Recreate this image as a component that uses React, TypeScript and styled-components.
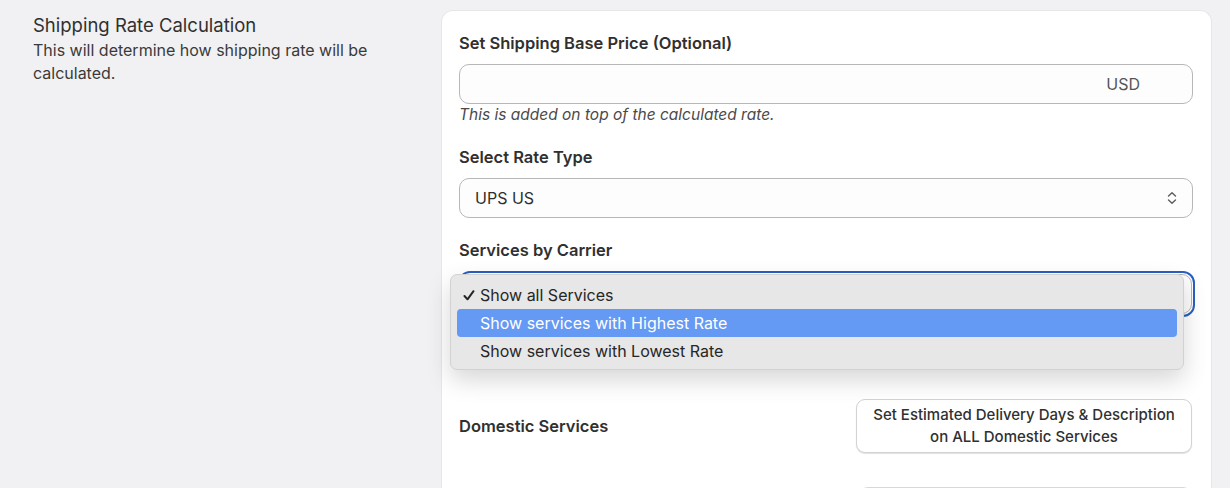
import React from 'react';
import styled, { createGlobalStyle } from 'styled-components';

const GlobalStyle = createGlobalStyle`
	html, body {
		margin: 0;
		padding: 0;
		background: #f1f1f3;
		overflow: hidden;
	}
	body {
		font-family: Inter, "Noto Sans", "Liberation Sans", sans-serif;
		color: #303030;
	}
`;

const Page = styled.div`
	display: grid;
	grid-template-columns: 408px 771px;
	height: 488px;
	padding: 10px 0 0 33px;
	box-sizing: border-box;
`;

const Intro = styled.div`
	padding-top: 4px;
`;

const IntroTitle = styled.div`
	font-size: 18.5px;
	line-height: 22px;
	color: #303030;
	margin-bottom: 3px;
`;

const IntroText = styled.div`
	font-size: 16px;
	line-height: 23px;
	color: #3a3a3a;
	width: 360px;
`;

const Card = styled.div`
	background: #ffffff;
	border: 1px solid #e6e6e8;
	border-bottom: none;
	border-radius: 12px 12px 0 0;
	padding: 22px 18px 0 17px;
	box-sizing: border-box;
`;

const Label = styled.div<{ top?: number }>`
	font-size: 16.5px;
	font-weight: 600;
	line-height: 20px;
	color: #303030;
	margin-top: ${p => p.top || 0}px;
	margin-bottom: 11px;
`;

const Field = styled.div`
	display: flex;
	align-items: center;
	justify-content: space-between;
	height: 40px;
	border: 1px solid #b7b7b7;
	border-radius: 10px;
	background: #fdfdfd;
	box-sizing: border-box;
	padding: 0 15px;
	font-size: 16px;
	color: #303030;
`;

const Suffix = styled.span`
	color: #555;
	margin-right: 37px;
`;

const Help = styled.div`
	font-size: 15.5px;
	font-style: italic;
	line-height: 20px;
	color: #4a4a4a;
	margin-top: 1px;
`;

const FocusRing = styled.div`
	position: relative;
	border: 2px solid #2b5fbf;
	border-radius: 12px;
	padding: 1px;
	margin-left: -1px;
	margin-right: -2px;
`;

const Menu = styled.div`
	position: absolute;
	left: -10px;
	top: 1px;
	width: 734px;
	padding: 6px 6px 4px 6px;
	box-sizing: border-box;
	background: #e7e7e7;
	border: 1px solid #d2d2d2;
	border-radius: 7px;
	box-shadow: 0 10px 24px rgba(0, 0, 0, 0.16);
	z-index: 2;
`;

const MenuItem = styled.div<{ active?: boolean }>`
	position: relative;
	height: 28px;
	line-height: 28px;
	padding-left: 23px;
	border-radius: 4px;
	font-size: 16px;
	color: ${p => (p.active ? '#ffffff' : '#262626')};
	background: ${p => (p.active ? '#6499f4' : 'transparent')};
`;

const Check = styled.span`
	position: absolute;
	left: 6px;
	top: 9px;
	display: flex;
`;

const Row = styled.div`
	display: flex;
	align-items: center;
	justify-content: space-between;
	margin-top: 82px;
`;

const RowTitle = styled.div`
	font-size: 16.5px;
	font-weight: 600;
	color: #303030;
`;

const Button = styled.button`
	width: 336px;
	height: 54px;
	margin-right: 1px;
	border: 1px solid #d3d3d3;
	border-radius: 9px;
	background: #fff;
	box-shadow: 0 1px 1px rgba(0, 0, 0, 0.12);
	font-family: inherit;
	font-size: 15px;
	font-weight: 500;
	line-height: 22px;
	color: #303030;
	padding: 0 6px;
`;

const NextField = styled.div`
	margin: 34px 1px 0 400px;
	height: 20px;
	border: 1px solid #d8d8d8;
	border-radius: 9px;
`;

function UpDown() {
	return <svg width="10" height="14" viewBox="0 0 10 14" fill="none" stroke="#5c5c5c" strokeWidth="1.4" strokeLinecap="round" strokeLinejoin="round">
	         <path d="M1.5 5 L5 1.8 L8.5 5" />
	         <path d="M1.5 9 L5 12.2 L8.5 9" />
	       </svg>;
}

function CheckMark() {
	return <svg width="12" height="11" viewBox="0 0 12 11" fill="none" stroke="#262626" strokeWidth="2" strokeLinecap="round" strokeLinejoin="round">
	         <path d="M1.5 6 L4.5 9.3 L10.5 1.2" />
	       </svg>;
}

function App() {
	return <>
	         <GlobalStyle />
	         <Page>
	           <Intro>
	             <IntroTitle>Shipping Rate Calculation</IntroTitle>
	             <IntroText>This will determine how shipping rate will be calculated.</IntroText>
	           </Intro>
	           <Card>
	             <Label>Set Shipping Base Price (Optional)</Label>
	             <Field><span></span><Suffix>USD</Suffix></Field>
	             <Help>This is added on top of the calculated rate.</Help>

	             <Label top={22}>Select Rate Type</Label>
	             <Field>UPS US<UpDown /></Field>

	             <Label top={22}>Services by Carrier</Label>
	             <FocusRing>
	               <Field><span></span><UpDown /></Field>
	               <Menu>
	                 <MenuItem><Check><CheckMark /></Check>Show all Services</MenuItem>
	                 <MenuItem active>Show services with Highest Rate</MenuItem>
	                 <MenuItem>Show services with Lowest Rate</MenuItem>
	               </Menu>
	             </FocusRing>

	             <Row>
	               <RowTitle>Domestic Services</RowTitle>
	               <Button>Set Estimated Delivery Days &amp; Description on ALL Domestic Services</Button>
	             </Row>
	             <NextField />
	           </Card>
	         </Page>
	       </>;
}

export default App;
